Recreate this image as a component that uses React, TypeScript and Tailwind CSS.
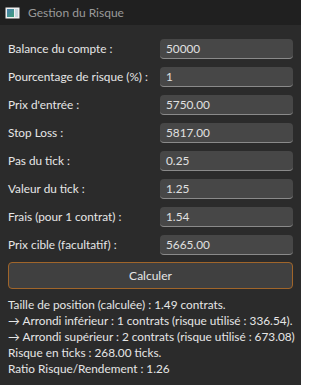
const fields = [
  { label: "Balance du compte :", value: "50000" },
  { label: "Pourcentage de risque (%) :", value: "1" },
  { label: "Prix d'entrée :", value: "5750.00" },
  { label: "Stop Loss :", value: "5817.00" },
  { label: "Pas du tick :", value: "0.25" },
  { label: "Valeur du tick :", value: "1.25" },
  { label: "Frais (pour 1 contrat) :", value: "1.54" },
  { label: "Prix cible (facultatif) :", value: "5665.00" },
];

const results = [
  "Taille de position (calculée) : 1.49 contrats.",
  "→ Arrondi inférieur : 1 contrats (risque utilisé : 336.54).",
  "→ Arrondi supérieur : 2 contrats (risque utilisé : 673.08)",
  "Risque en ticks : 268.00 ticks.",
  "Ratio Risque/Rendement : 1.26",
];

function AppIcon() {
  return (
    <svg width="15" height="12" viewBox="0 0 15 12">
      <rect x="0.5" y="0.5" width="14" height="11" fill="#f0f0f0" />
      <defs>
        <linearGradient id="g" x1="0" y1="0" x2="1" y2="1">
          <stop offset="0" stopColor="#4a7fb0" />
          <stop offset="1" stopColor="#3fa07a" />
        </linearGradient>
      </defs>
      <rect x="2" y="2" width="7" height="8" fill="url(#g)" />
      <rect x="10" y="2" width="3" height="8" fill="#c8d8e0" />
    </svg>
  );
}

export default function App() {
  return (
    <div
      className="flex h-[385px] w-[301px] flex-col bg-[#2b2b2b] text-[11.8px] text-[#e6e6e6]"
      style={{ fontFamily: 'Lato, "Open Sans", sans-serif' }}
    >
      {/* Title bar */}
      <div className="flex h-[25px] items-center gap-2 bg-[#202020] pl-[5px]">
        <AppIcon />
        <span className="text-[12px] text-[#9a9a9a]">Gestion du Risque</span>
      </div>

      <div className="flex flex-col px-2 pt-[14px]">
        <div className="flex flex-col gap-2">
          {fields.map((f) => (
            <div key={f.label} className="flex h-5 items-center">
              <span className="w-[152px] shrink-0 whitespace-nowrap">{f.label}</span>
              <div className="flex h-5 flex-1 items-center rounded-[4px] border-b border-[#8a8a8a] bg-[#474747] px-[6px] text-[#e0e0e0]">
                {f.value}
              </div>
            </div>
          ))}
        </div>

        <button className="mt-[7px] h-[27px] w-full rounded-[4px] border border-[#a0652a] bg-[#404040] text-[12px] text-[#e6e6e6]">
          Calculer
        </button>

        <div className="mt-[8px] flex flex-col leading-4">
          {results.map((r) => (
            <div key={r} className="whitespace-nowrap">
              {r}
            </div>
          ))}
        </div>
      </div>
    </div>
  );
}
